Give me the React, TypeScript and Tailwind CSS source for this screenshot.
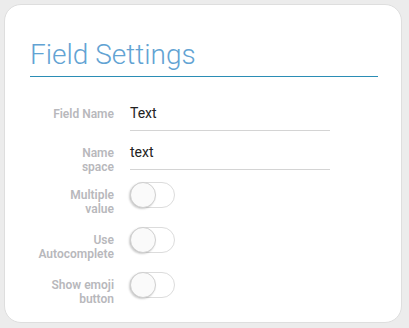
import React from "react";

function Toggle() {
  return (
    <div className="relative h-[26px] w-[45px] rounded-full border border-[#dcdcdc] bg-white">
      <div className="absolute left-[-1px] top-[-1px] h-[26px] w-[26px] rounded-full border border-[#d0d0d0] bg-[#fafafa] shadow-[-1px_1px_2px_rgba(0,0,0,0.2)]" />
    </div>
  );
}

function Label({ children, pt }: { children: React.ReactNode; pt: string }) {
  return (
    <div className={"w-[84px] shrink-0 text-right text-[12px] font-semibold leading-[14px] text-[#b8b8bc] " + pt}>
      {children}
    </div>
  );
}

export default function App() {
  return (
    <div className="h-[328px] w-[409px] bg-[#ececec] p-[4px] pr-[7px] pb-[5px]" style={{ fontFamily: "Roboto, 'Liberation Sans', sans-serif" }}>
      <div className="h-full w-full rounded-[17px] border border-[#dedede] bg-white pl-[25px] pr-[23px] pt-[33px]">
        <div className="border-b border-[#2b8db5] pb-[4px]">
          <div className="text-[28px] font-light leading-[34px] text-[#62a3d3]">Field Settings</div>
        </div>
        <div className="mt-[24px] flex flex-col">
          <div className="flex items-start">
            <Label pt="pt-[6px]">Field Name</Label>
            <div className="ml-[16px] w-[200px] border-b border-[#d4d4d4] pt-[2px] pb-[7px] text-[14px] leading-[20px] text-[#222]">
              Text
            </div>
          </div>
          <div className="mt-[9px] flex items-start">
            <Label pt="pt-[6px]">Name<br />space</Label>
            <div className="ml-[16px] w-[200px] border-b border-[#d4d4d4] pt-[2px] pb-[7px] text-[14px] leading-[20px] text-[#222]">
              text
            </div>
          </div>
          <div className="mt-[8px] flex items-start">
            <Label pt="pt-[6px]">Multiple<br />value</Label>
            <div className="ml-[16px]"><Toggle /></div>
          </div>
          <div className="mt-[11px] flex items-start">
            <Label pt="pt-[6px]">Use<br />Autocomplete</Label>
            <div className="ml-[16px]"><Toggle /></div>
          </div>
          <div className="mt-[11px] flex items-start">
            <Label pt="pt-[6px]">Show emoji<br />button</Label>
            <div className="ml-[16px]"><Toggle /></div>
          </div>
        </div>
      </div>
    </div>
  );
}
